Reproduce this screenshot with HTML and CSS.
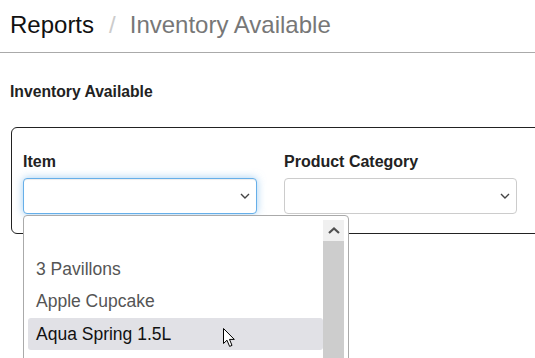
FILE: index.html
```html
<!DOCTYPE html>
<html>
<head>
<meta charset="utf-8">
<link rel="stylesheet" href="styles.css">
</head>
<body>
<div class="page">
<header class="page-header">
  <span class="crumb">Reports</span><span class="sep">/</span><span class="crumb-current">Inventory Available</span>
</header>
<h2 class="section-title">Inventory Available</h2>
<div class="card">
  <div class="fields">
    <div class="field">
      <label class="label">Item</label>
      <div class="select focused">
        <svg class="chev" width="10" height="6" viewBox="0 0 10 6"><polyline points="1,1 5,5 9,1" fill="none" stroke="#444" stroke-width="1.4"/></svg>
      </div>
      <div class="dropdown">
        <ul class="options">
          <li class="option empty"></li>
          <li class="option">3 Pavillons</li>
          <li class="option">Apple Cupcake</li>
          <li class="option active">Aqua Spring 1.5L</li>
        </ul>
        <div class="scrollbar">
          <div class="scroll-btn">
            <svg width="12" height="7" viewBox="0 0 12 7"><polyline points="1,6 6,1.5 11,6" fill="none" stroke="#505050" stroke-width="2.2"/></svg>
          </div>
          <div class="scroll-track"></div>
        </div>
        <svg class="cursor" width="13" height="20" viewBox="0 0 13 20"><path d="M0.5 0.5 L0.5 15.5 L4 12.2 L6.6 18.4 L9 17.4 L6.5 11.4 L11.3 11.4 Z" fill="#fff" stroke="#000" stroke-width="1" stroke-linejoin="round"/></svg>
      </div>
    </div>
    <div class="field">
      <label class="label">Product Category</label>
      <div class="select">
        <svg class="chev" width="10" height="6" viewBox="0 0 10 6"><polyline points="1,1 5,5 9,1" fill="none" stroke="#444" stroke-width="1.4"/></svg>
      </div>
    </div>
  </div>
</div>
</div>
</body>
</html>
```

FILE: styles.css
```css
html, body {
  margin: 0;
  padding: 0;
  height: 100%;
}

body {
  background: #fff;
  font-family: "Liberation Sans", Arial, sans-serif;
  color: #333;
}

.page {
  height: 358px;
  overflow: hidden;
}

.page-header {
  padding: 10px 0 12px 10px;
  line-height: 30px;
  font-size: 24px;
  border-bottom: 1px solid #aaa;
  white-space: nowrap;
}

.crumb {
  color: #111;
}

.sep {
  color: #ccc;
  padding: 0 14px 0 15px;
}

.crumb-current {
  color: #777;
}

.section-title {
  margin: 29px 0 0 10px;
  font-size: 15.7px;
  line-height: 20px;
  font-weight: bold;
  color: #222;
}

.card {
  margin: 25px -40px 0 11px;
  border: 1px solid #222;
  border-radius: 6px;
  padding: 24px 0 19px 11px;
}

.fields {
  display: grid;
  grid-template-columns: 234px 233px;
  column-gap: 27px;
}

.field {
  position: relative;
}

.label {
  display: block;
  font-size: 16px;
  line-height: 20px;
  font-weight: bold;
  color: #222;
  margin-bottom: 6px;
}

.select {
  height: 36px;
  box-sizing: border-box;
  border: 1px solid #ccc;
  border-radius: 4px;
  display: flex;
  align-items: center;
  justify-content: flex-end;
  padding-right: 6px;
  background: #fff;
}

.select.focused {
  border-color: #66afe9;
  box-shadow: inset 0 1px 1px rgba(0,0,0,.075), 0 0 8px rgba(102,175,233,.6);
}

.chev {
  display: block;
}

.dropdown {
  position: absolute;
  left: 0;
  top: 63px;
  width: 326px;
  height: 150px;
  box-sizing: border-box;
  background: #fff;
  border: 1px solid #aaa;
  border-radius: 4px;
  display: flex;
  padding: 4px 4px 0 4px;
  z-index: 5;
}

.options {
  list-style: none;
  margin: 0;
  padding: 0;
  flex: 1;
}

.option {
  height: 32.5px;
  line-height: 32px;
  padding-left: 8px;
  font-size: 17.5px;
  color: #555;
  border-radius: 3px;
  white-space: nowrap;
}

.option.active {
  background: #e1e1e6;
  color: #111;
  height: 32px;
}

.scrollbar {
  width: 21px;
  display: flex;
  flex-direction: column;
}

.scroll-btn {
  height: 21px;
  background: #f0f0f0;
  display: flex;
  align-items: center;
  justify-content: center;
}

.scroll-btn svg {
  display: block;
}

.scroll-track {
  flex: 1;
  background: #cdcdcd;
}

.cursor {
  position: absolute;
  left: 199px;
  top: 112px;
}
```
